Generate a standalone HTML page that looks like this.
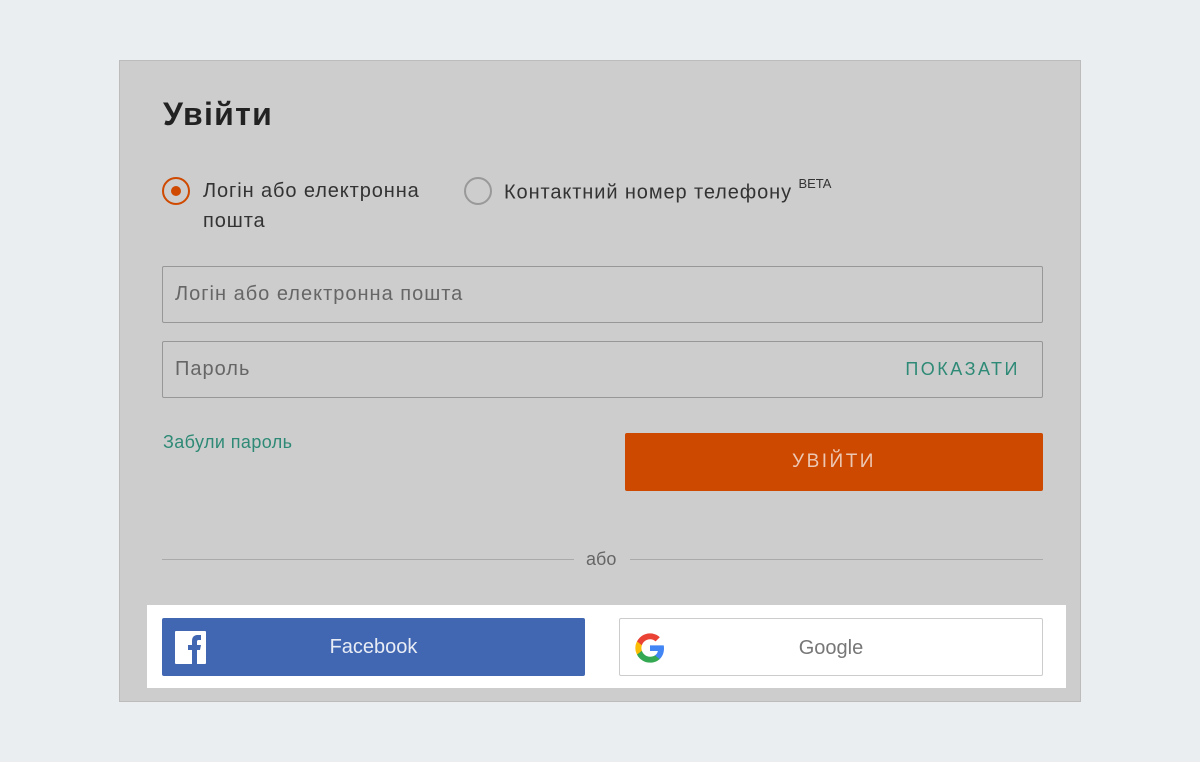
<!DOCTYPE html>
<html><head><meta charset="utf-8"><style>
*{margin:0;padding:0;box-sizing:border-box}
body{width:1200px;height:762px;background:#eaeef1;font-family:"Liberation Sans","DejaVu Sans",sans-serif;position:relative;overflow:hidden}
.card{position:absolute;left:119px;top:60px;width:962px;height:642px;background:#cdcdcd;border:1px solid #bcbcbc}
.a{position:absolute}
h1{position:absolute;left:163px;top:96px;font-size:32px;font-weight:bold;color:#222;letter-spacing:1.3px}
.radio{position:absolute;width:28px;height:28px;border-radius:50%}
.t{color:#333;font-size:20px;line-height:30px;letter-spacing:0.9px}
.inp{position:absolute;left:162px;width:881px;height:57px;border:1px solid #979797;border-radius:2px;color:#666;font-size:20px;line-height:55px;padding-left:12px;letter-spacing:1px}
.teal{color:#2e8a76}
</style></head><body>
<div class="card"></div>
<h1>Увійти</h1>
<div class="radio" style="left:162px;top:177px;border:2px solid #cf4a00"><div style="position:absolute;left:7px;top:7px;width:10px;height:10px;border-radius:50%;background:#cf4a00"></div></div>
<div class="a t" style="left:203px;top:176px">Логін або електронна<br>пошта</div>
<div class="radio" style="left:464px;top:177px;border:2px solid #999"></div>
<div class="a t" style="left:504px;top:172px">Контактний номер телефону <sup style="font-size:13px;position:relative;top:-3px;letter-spacing:0">BETA</sup></div>
<div class="inp" style="top:266px">Логін або електронна пошта</div>
<div class="inp" style="top:341px">Пароль<span class="teal" style="position:absolute;right:22px;letter-spacing:2.5px;font-size:18px">ПОКАЗАТИ</span></div>
<div class="a teal" style="left:163px;top:432px;font-size:18px;letter-spacing:0.4px">Забули пароль</div>
<div class="a" style="left:625px;top:433px;width:418px;height:58px;background:#cd4900;border-radius:2px;color:#ecc8b4;font-size:19px;letter-spacing:2.5px;text-align:center;line-height:58px">УВІЙТИ</div>
<div class="a" style="left:162px;top:559px;width:412px;height:1px;background:#aaa"></div>
<div class="a" style="left:630px;top:559px;width:413px;height:1px;background:#aaa"></div>
<div class="a" style="left:586px;top:549px;font-size:18px;color:#666">або</div>
<div class="a" style="left:147px;top:605px;width:919px;height:83px;background:#fff"></div>
<div class="a" style="left:162px;top:618px;width:423px;height:58px;background:#4267b2;border-radius:2px;color:#e8ecf5;font-size:20px;text-align:center;line-height:58px">Facebook</div>
<svg class="a" style="left:175px;top:631px" width="31" height="33" viewBox="0 0 31 33"><rect width="31" height="33" rx="1" fill="#fff"/><path d="M17 33V19h-4v-5h4v-4c0-4 2-6 6-6h3v5h-2c-2 0-2 1-2 2v3h4l-1 5h-3v14z" fill="#4267b2"/></svg>
<div class="a" style="left:619px;top:618px;width:424px;height:58px;background:#fff;border:1px solid #ccc;border-radius:2px;color:#777;font-size:20px;text-align:center;line-height:58px">Google</div>
<svg class="a" style="left:634px;top:632px" width="32" height="32" viewBox="0 0 48 48"><path fill="#4285F4" d="M45 24.5c0-1.6-.1-3.1-.4-4.5H24v8.5h11.8c-.5 2.7-2 5-4.4 6.6v5.5h7.1C42.6 36.8 45 31.2 45 24.5z"/><path fill="#34A853" d="M24 46c5.9 0 10.9-2 14.5-5.4l-7.1-5.5c-2 1.3-4.5 2.1-7.4 2.1-5.7 0-10.5-3.8-12.2-9H4.5v5.7C8.1 41 15.5 46 24 46z"/><path fill="#FBBC05" d="M11.8 28.2c-.4-1.3-.7-2.7-.7-4.2s.3-2.9.7-4.2v-5.7H4.5C3 17.1 2 20.4 2 24s1 6.9 2.5 9.9z"/><path fill="#EA4335" d="M24 10.8c3.2 0 6.1 1.1 8.4 3.3l6.3-6.3C34.9 4.2 29.9 2 24 2 15.5 2 8.1 7 4.5 14.1l7.3 5.7c1.7-5.2 6.5-9 12.2-9z"/></svg>
</body></html>
